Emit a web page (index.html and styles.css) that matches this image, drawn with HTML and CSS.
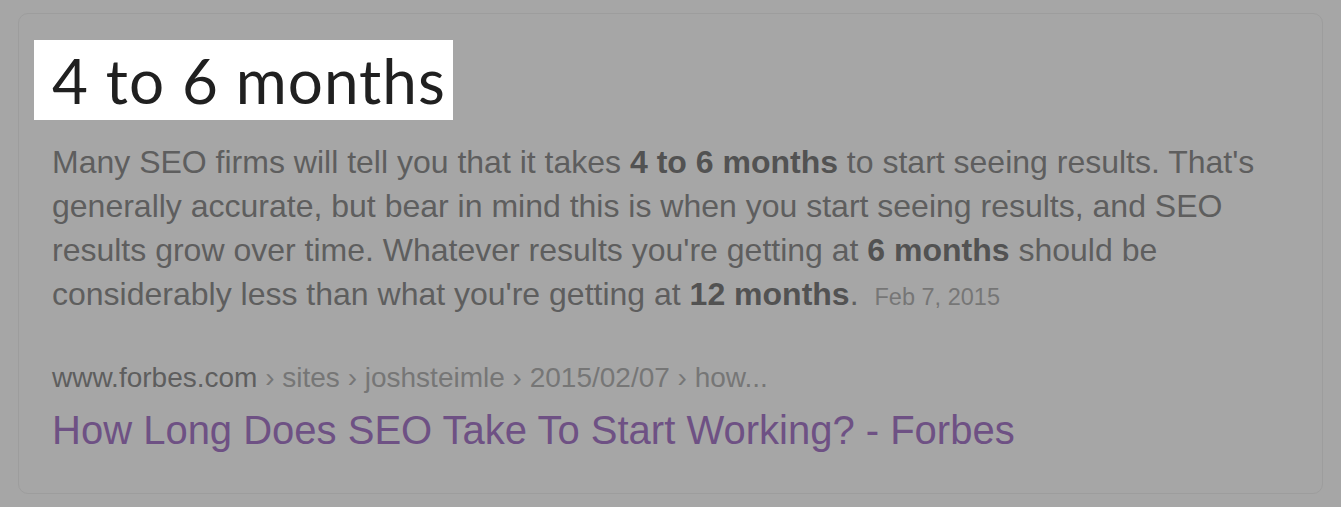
FILE: index.html
```html
<!DOCTYPE html>
<html lang="en">
<head>
    <meta charset="UTF-8">
    <title>4 to 6 months</title>
    <link rel="stylesheet" href="styles.css">
</head>
<body>
    <div class="card">
        <div class="answer">4 to 6 months</div>
        <p class="snippet">Many SEO firms will tell you that it takes <b>4 to 6 months</b> to start seeing results. That's generally accurate, but bear in mind this is when you start seeing results, and SEO results grow over time. Whatever results you're getting at <b>6 months</b> should be considerably less than what you're getting at <b>12 months</b>.<span class="date">Feb 7, 2015</span></p>
        <div class="cite"><span class="host">www.forbes.com</span> › sites › joshsteimle › 2015/02/07 › how...</div>
        <a class="title" href="#">How Long Does SEO Take To Start Working? - Forbes</a>
    </div>
</body>
</html>
```

FILE: styles.css
```css
body { margin: 0; background: #a6a6a6; font-family: "Liberation Sans", Arial, sans-serif; }
.card { margin: 13px 18px 0 18px; height: 481px; box-sizing: border-box; border: 1px solid #9d9d9d; border-radius: 10px; padding: 26px 15px 0 15px; }
.answer { display: inline-block; background: #fff; color: #202020; font-family: Lato, sans-serif; font-size: 62px; letter-spacing: 1px; line-height: 80px; height: 80px; padding: 0 7px 0 18px; }
.snippet { margin: 20px 0 0 18px; max-width: 1215px; font-size: 32px; line-height: 44px; color: #5e5e5e; }
.snippet b { color: #525252; }
.date { font-size: 23.5px; color: #767676; margin-left: 16px; }
.cite { margin: 39px 0 0 18px; font-size: 28px; line-height: 40px; color: #767676; }
.cite .host { color: #5e5e5e; }
.title { display: block; margin: 6px 0 0 18px; font-size: 40px; line-height: 52px; color: #6e5184; text-decoration: none; }
```
